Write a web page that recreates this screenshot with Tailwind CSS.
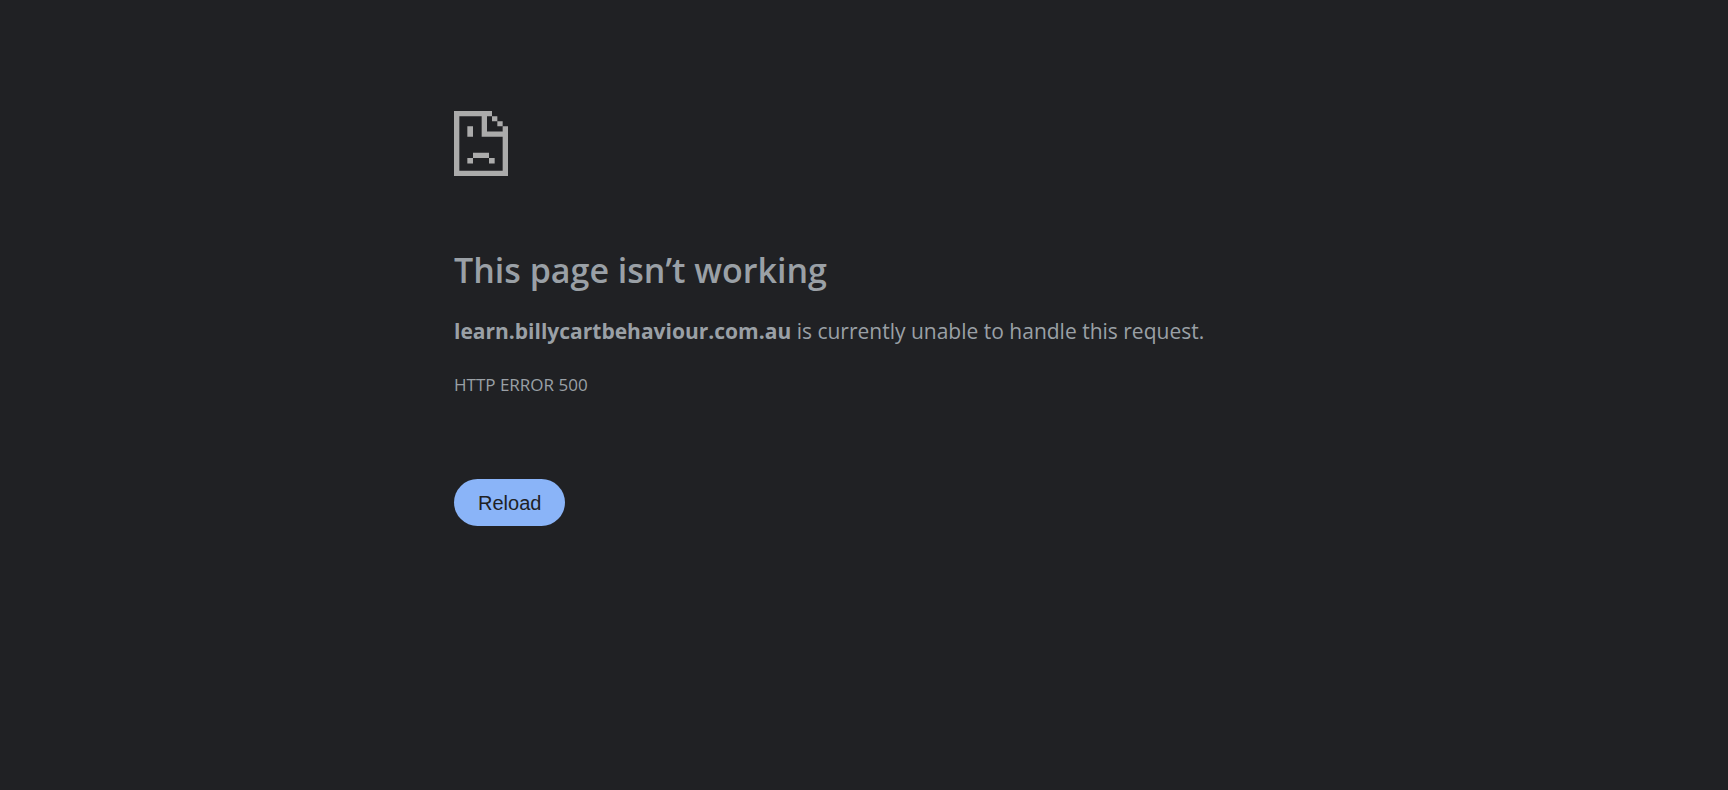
<!DOCTYPE html>
<html lang="en">
<head>
<meta charset="utf-8">
<meta name="viewport" content="width=device-width, initial-scale=1">
<title>learn.billycartbehaviour.com.au</title>
<script src="https://cdn.jsdelivr.net/npm/@tailwindcss/browser@4"></script>
</head>
<body class="min-h-screen bg-[#202124] text-[#9aa0a6] font-['Segoe_UI','Open_Sans','Noto_Sans',sans-serif]">
<main class="mx-auto w-full max-w-[820px] pt-[111px]">
  <svg class="block h-[65px] w-[54px]" viewBox="0 0 162 196" preserveAspectRatio="none" fill="#ababab" aria-hidden="true">
    <path d="M0 0H114V16H99V62H146V46H162V196H0ZM16 16V180H146V78H83V16Z" fill-rule="evenodd"/>
    <path d="M114 16H130V31H114ZM130 31H146V46H130ZM40 46H57V78H40ZM57 126H105V142H57ZM40 142H57V158H40ZM105 142H122V158H105Z"/>
  </svg>
  <h1 class="mt-[70px] text-[34px] leading-[48px] font-semibold">This page isn’t working</h1>
  <p class="mt-[22px] text-[21px] leading-[30px]"><strong class="font-bold">learn.billycartbehaviour.com.au</strong> is currently unable to handle this request.</p>
  <p class="mt-[25px] text-[17px] leading-[28px]">HTTP ERROR 500</p>
  <button type="button" class="mt-[80px] block h-[47px] rounded-full bg-[#8ab4f8] px-6 font-['Liberation_Sans',Arial,sans-serif] text-[20px] leading-[24px] text-[#202124]">Reload</button>
</main>
</body>
</html>
